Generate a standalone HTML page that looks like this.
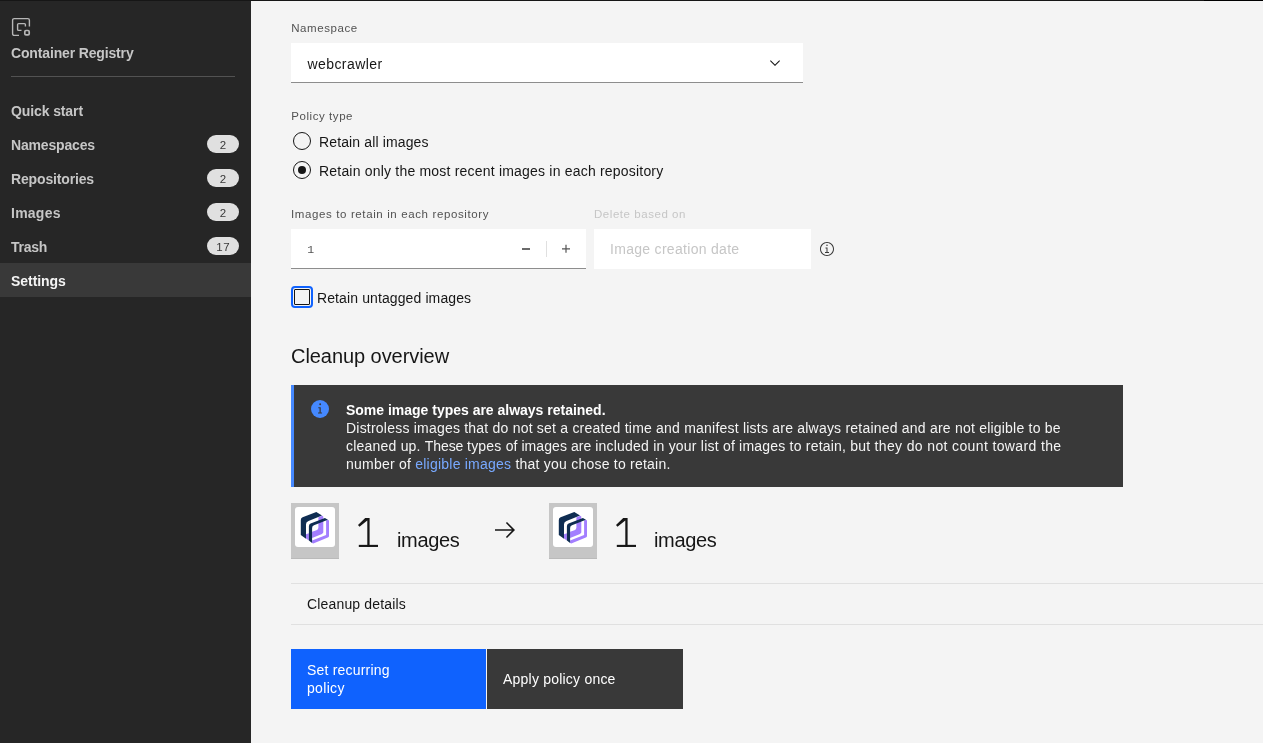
<!DOCTYPE html>
<html lang="en">
<head>
<meta charset="utf-8">
<title>Container Registry - Settings</title>
<style>
*{box-sizing:border-box;margin:0;padding:0}
html,body{width:1263px;height:743px;overflow:hidden}
body{position:relative;background:#f4f4f4;font-family:"Liberation Sans",sans-serif;font-size:14px;line-height:18px;color:#161616}
.abs{position:absolute;white-space:nowrap}
#wrap{position:absolute;left:0;top:0;width:1263px;height:743px;will-change:transform}
#topbar{position:absolute;left:0;top:0;width:1263px;height:1px;background:#000;z-index:5}
#topbar i{position:absolute;left:0;top:0;width:1204px;height:1px;background:#161616}
/* sidebar */
#side{position:absolute;left:0;top:0;width:251px;height:743px;background:#262626}
#side .ttl{left:11px;top:44px;font-weight:700;font-size:14px;line-height:18px;color:#c6c6c6;letter-spacing:-0.15px}
#side .rule{position:absolute;left:11px;top:76px;width:224px;height:1px;background:#525252}
#side .nav{position:absolute;left:0;width:251px;height:34px}
#side .nav.on{background:#393939}
#side .nav span.t{position:absolute;left:11px;top:9px;font-weight:700;font-size:14px;line-height:18px;color:#c6c6c6;white-space:nowrap}
#side .nav.on span.t{color:#f4f4f4}
#side .nav span.b{position:absolute;left:207px;top:8px;width:32px;height:18px;border-radius:9px;background:#e0e0e0;color:#393939;font-size:11.5px;line-height:20px;text-align:center;letter-spacing:0.5px;padding-left:0.5px}
/* main */
.lbl{font-size:11.5px;line-height:16px;color:#525252}
.field{position:absolute;background:#fff;border-bottom:1px solid #8d8d8d}
.radio{position:absolute;width:18px;height:18px;border:1px solid #161616;border-radius:50%}
.radio.on::after{content:"";position:absolute;left:4px;top:4px;width:8px;height:8px;border-radius:50%;background:#161616}
.tile{width:48px;height:56px;background:#c6c6c6;box-shadow:inset 0 -1px 0 #bababa}
.tile .in{position:absolute;left:4px;top:4px;width:40px;height:40px;background:#fff;border-radius:3px}
.big1{position:absolute}
.imgs{font-size:20px;line-height:28px;letter-spacing:-0.33px}
</style>
</head>
<body>
<div id="wrap">
<div id="topbar"><i></i></div>

<div id="side">
  <svg class="abs" style="left:11px;top:17px" width="20" height="20" viewBox="0 0 20 20" fill="none" stroke="#b6b6b6" stroke-width="1.4">
    <path d="M8 18.4H3.2a1.6 1.6 0 0 1-1.600-1.600V3.200a1.600 1.600 0 0 1 1.600-1.600h13.600a1.600 1.600 0 0 1 1.600 1.600V9.500"/>
    <path d="M10.500 13.400H7.600a1 1 0 0 1-1-1V7.600a1 1 0 0 1 1-1h5.800a1 1 0 0 1 1 1v2"/>
    <rect x="13.800" y="13.500" width="4.400" height="4.400" rx="1.200" stroke-width="1.700"/>
  </svg>
  <div class="abs ttl">Container Registry</div>
  <div class="rule"></div>
  <div class="nav" style="top:93px"><span class="t" style="letter-spacing:-0.11px">Quick start</span></div>
  <div class="nav" style="top:127px"><span class="t" style="letter-spacing:-0.17px">Namespaces</span><span class="b">2</span></div>
  <div class="nav" style="top:161px"><span class="t" style="letter-spacing:-0.15px">Repositories</span><span class="b">2</span></div>
  <div class="nav" style="top:195px"><span class="t" style="letter-spacing:0.25px">Images</span><span class="b">2</span></div>
  <div class="nav" style="top:229px"><span class="t" style="letter-spacing:-0.25px">Trash</span><span class="b">17</span></div>
  <div class="nav on" style="top:263px"><span class="t" style="letter-spacing:-0.05px">Settings</span></div>
</div>

<!-- Namespace -->
<div class="abs lbl" style="left:291.200px;top:20px;letter-spacing:0.57px">Namespace</div>
<div class="field" style="left:291px;top:43px;width:512px;height:40px"></div>
<div class="abs" style="left:307.400px;top:55px;letter-spacing:0.44px">webcrawler</div>
<svg class="abs" style="left:767px;top:55px" width="16" height="16" viewBox="0 0 16 16"><path fill="#161616" d="M8 11L3 6 3.700 5.300 8 9.600 12.300 5.300 13 6z"/></svg>

<!-- Policy type -->
<div class="abs lbl" style="left:291.200px;top:108px;letter-spacing:0.57px">Policy type</div>
<div class="radio" style="left:293px;top:132px"></div>
<div class="abs" style="left:319px;top:133px;letter-spacing:0.13px">Retain all images</div>
<div class="radio on" style="left:293px;top:161px"></div>
<div class="abs" style="left:319px;top:162px;letter-spacing:0.2px">Retain only the most recent images in each repository</div>

<!-- Images to retain -->
<div class="abs lbl" style="left:291px;top:206px;letter-spacing:0.62px">Images to retain in each repository</div>
<div class="field" style="left:291px;top:229px;width:295px;height:40px"></div>
<div class="abs" style="left:307.300px;top:242px;font-family:'Liberation Mono',monospace;font-size:11.5px;line-height:16px;color:#525252">1</div>
<div class="abs" style="left:522px;top:248px;width:8px;height:1.500px;background:#6a6a6a"></div>
<div class="abs" style="left:546px;top:241px;width:1px;height:16px;background:#e0e0e0"></div>
<svg class="abs" style="left:558px;top:241px" width="16" height="16" viewBox="0 0 16 16"><path fill="#555" d="M8.600 3.800H7.400V7.200H4V8.400H7.400V11.800H8.600V8.400H12V7.200H8.600z"/></svg>

<div class="abs lbl" style="left:594px;top:206px;letter-spacing:0.55px;color:#c6c6c6">Delete based on</div>
<div class="abs" style="left:594px;top:229px;width:217px;height:40px;background:#fff"></div>
<div class="abs" style="left:610px;top:240px;letter-spacing:0.3px;color:#c6c6c6">Image creation date</div>
<svg class="abs" style="left:819px;top:241px" width="16" height="16" viewBox="0 0 16 16" fill="#393939"><path d="M8.500 11L8.500 6.500 6.500 6.500 6.500 7.500 7.500 7.500 7.500 11 6 11 6 12 10 12 10 11zM8 3.500c-.4 0-.8.300-.8.800S7.600 5 8 5c.4 0 .8-.3.8-.8S8.400 3.500 8 3.500z"/><path d="M8 15c-3.900 0-7-3.100-7-7s3.100-7 7-7 7 3.100 7 7S11.900 15 8 15zM8 2C4.700 2 2 4.700 2 8s2.700 6 6 6 6-2.700 6-6S11.300 2 8 2z"/></svg>

<!-- Checkbox -->
<div class="abs" style="left:294px;top:289px;width:16px;height:16px;border:1px solid #161616;border-radius:1px;outline:2px solid #0f62fe;outline-offset:1px"></div>
<div class="abs" style="left:317px;top:289px;letter-spacing:0.11px">Retain untagged images</div>

<!-- Cleanup overview -->
<div class="abs" style="left:291px;top:342px;font-size:20px;line-height:28px;letter-spacing:-0.06px">Cleanup overview</div>

<!-- Notification -->
<div class="abs" style="left:291px;top:385px;width:832px;height:102px;background:#393939;border-left:3px solid #4589ff"></div>
<svg class="abs" style="left:310px;top:399px" width="20" height="20" viewBox="0 0 20 20"><circle cx="10" cy="10" r="9" fill="#4589ff"/><path fill="#393939" d="M9.200 5.300a.95.950 0 1 0 1.900 0 .95.950 0 1 0-1.900 0zM8.300 8.200h2.450v5.300h1.300v1.100H8v-1.100h1.500V9.300H8.300z"/></svg>
<div class="abs" style="left:346px;top:401px;font-weight:700;color:#fff;letter-spacing:-0.01px">Some image types are always retained.</div>
<div class="abs" style="left:346px;top:419px;color:#f4f4f4;letter-spacing:0.215px">Distroless images that do not set a created time and manifest lists are always retained and are not eligible to be</div>
<div class="abs" style="left:346px;top:437px;color:#f4f4f4;letter-spacing:0.212px">cleaned up. <span style="letter-spacing:-0.1px">These </span><span style="letter-spacing:0.22px">types </span><span style="letter-spacing:0.06px">of images are </span>included in your list of images to retain, but <span style="letter-spacing:0.37px">they do not count toward the</span></div>
<div class="abs" style="left:346px;top:455px;color:#f4f4f4;letter-spacing:0.23px">number of <span style="color:#78a9ff">eligible images</span> that you chose to retain.</div>

<!-- Overview tiles -->
<div class="abs tile" style="left:291px;top:503px"><div class="in"><svg width="40" height="40" viewBox="0 0 40 40">
<path fill="#a37eff" d="M23.400 10.200L27.200 8.700 28.300 9.600V25.600L27 27 17.100 31V24.800L21.500 23.200Q23.400 22.500 23.400 20.500z"/>
<path fill="#a37eff" d="M11 27.300L13.900 26.200V33.400L11 31.600z"/>
<path fill="#a37eff" d="M31.100 13.500L32.800 12.800 34 13.600V29Q34 30.100 32.800 30.600L18.300 36.600 17.100 36V33.400L31.100 28z"/>
<path fill="#0f2d52" d="M21.300 4.900L27 8.600 13.500 13.900Q11 14.900 11 17.300V31.800L5.800 28V13Q5.800 11 7.600 10.300z"/>
<path fill="#0f2d52" d="M29.900 11L32.900 12.800 19 18.300Q17.100 19.100 17.100 21V36L13.900 33.600V19.200Q13.900 17.300 15.600 16.600z"/>
</svg></div></div>
<div class="abs tile" style="left:549px;top:503px"><div class="in"><svg width="40" height="40" viewBox="0 0 40 40">
<path fill="#a37eff" d="M23.400 10.200L27.200 8.700 28.300 9.600V25.600L27 27 17.100 31V24.800L21.500 23.200Q23.400 22.500 23.400 20.500z"/>
<path fill="#a37eff" d="M11 27.300L13.900 26.200V33.400L11 31.600z"/>
<path fill="#a37eff" d="M31.100 13.500L32.800 12.800 34 13.600V29Q34 30.100 32.800 30.600L18.300 36.600 17.100 36V33.400L31.100 28z"/>
<path fill="#0f2d52" d="M21.300 4.900L27 8.600 13.500 13.900Q11 14.900 11 17.300V31.800L5.800 28V13Q5.800 11 7.600 10.300z"/>
<path fill="#0f2d52" d="M29.900 11L32.900 12.800 19 18.300Q17.100 19.100 17.100 21V36L13.900 33.600V19.200Q13.900 17.300 15.600 16.600z"/>
</svg></div></div>

<svg class="abs" style="left:357px;top:517px" width="22" height="31" viewBox="0 0 22 31" fill="#161616"><path d="M8.200 1H12.600V29.970H10.300V3.600L2.500 9.800 1 8z"/><rect x="1.800" y="27.850" width="19.200" height="2.120"/></svg>
<div class="abs imgs" style="left:397px;top:525.500px">images</div>
<svg class="abs" style="left:493px;top:518px" width="24" height="24" viewBox="0 0 24 24"><path fill="#161616" d="M14 4L12.900 5.100 18.900 11.200 2 11.200 2 12.800 18.900 12.800 12.900 18.900 14 20 22 12z"/></svg>
<svg class="abs" style="left:615px;top:517px" width="22" height="31" viewBox="0 0 22 31" fill="#161616"><path d="M8.200 1H12.600V29.970H10.300V3.600L2.500 9.800 1 8z"/><rect x="1.800" y="27.850" width="19.200" height="2.120"/></svg>
<div class="abs imgs" style="left:654px;top:525.500px">images</div>

<!-- Accordion -->
<div class="abs" style="left:291px;top:583px;width:972px;height:42px;border-top:1px solid #e0e0e0;border-bottom:1px solid #e0e0e0"></div>
<div class="abs" style="left:307px;top:595px;letter-spacing:0.16px">Cleanup details</div>

<!-- Buttons -->
<div class="abs" style="left:291px;top:649px;width:195px;height:60px;background:#0f62fe"></div>
<div class="abs" style="left:307px;top:661px;color:#fff;letter-spacing:0.2px">Set recurring</div>
<div class="abs" style="left:307px;top:679px;color:#fff;letter-spacing:0.32px">policy</div>
<div class="abs" style="left:487px;top:649px;width:196px;height:60px;background:#393939"></div>
<div class="abs" style="left:503px;top:670px;color:#fff;letter-spacing:0.215px">Apply policy once</div>

</div>
</body>
</html>
